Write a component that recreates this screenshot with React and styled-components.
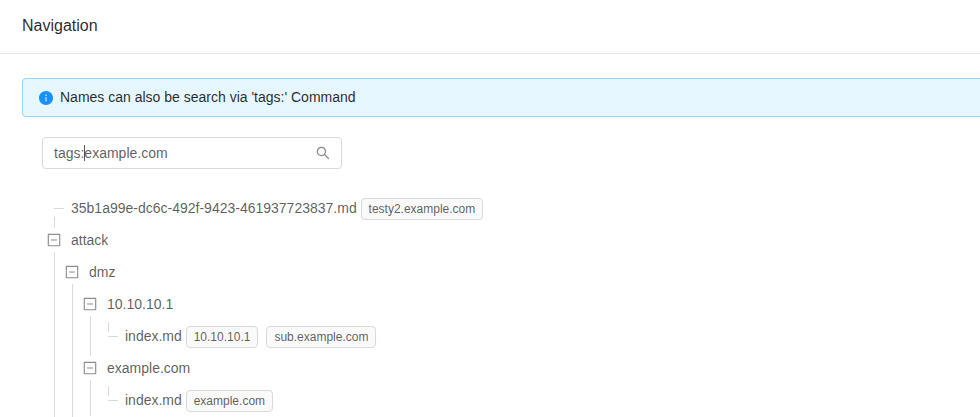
import React from "react";
import styled, { createGlobalStyle } from "styled-components";

const GlobalStyle = createGlobalStyle`
  * { box-sizing: border-box; }
  body {
    margin: 0;
    overflow: hidden;
    background: #fff;
    color: rgba(0, 0, 0, 0.65);
    font-family: "Liberation Sans", Arial, sans-serif;
    font-size: 14px;
    line-height: 22px;
  }
`;

const Page = styled.main`
  height: 417px;
  overflow: hidden;
`;

const Header = styled.header`
  height: 54px;
  padding: 14px 22px 0;
  border-bottom: 1px solid #e8e8e8;
`;

const Title = styled.h1`
  margin: 0;
  color: rgba(0, 0, 0, 0.85);
  font-size: 16px;
  font-weight: 400;
  line-height: 24px;
`;

const Alert = styled.div`
  display: flex;
  align-items: flex-start;
  gap: 6px;
  width: 980px;
  height: 39px;
  margin: 24px 0 20px 22px;
  padding: 7px 15px;
  border: 1px solid #91d5ff;
  border-radius: 4px;
  background: #e6f7ff;
  color: rgba(0, 0, 0, 0.85);
`;

const Icon = styled.svg`
  flex: none;
  display: block;
  width: 16px;
  height: 16px;
  margin-top: ${(p) => p.$drop || 0}px;
  fill: ${(p) => p.$color};
`;

const SearchBox = styled.div`
  display: flex;
  align-items: center;
  justify-content: space-between;
  width: 300px;
  height: 32px;
  margin-left: 42px;
  padding: 0 10px 0 11px;
  border: 1px solid #d9d9d9;
  border-radius: 4px;
`;

const Query = styled.span`
  white-space: nowrap;
`;

const Caret = styled.span`
  display: inline-block;
  width: 1px;
  height: 16px;
  margin-right: -1px;
  vertical-align: -3px;
  background: #595959;
`;

const Tree = styled.div`
  margin: 23px 0 0 45px;
`;

const Row = styled.div`
  display: flex;
  height: 32px;
`;

const Guide = styled.span`
  flex: none;
  width: 18px;
  height: 32px;
  background: linear-gradient(#d9d9d9, #d9d9d9) 9px 0 / 1px 100% no-repeat;
`;

/* The expanded node's guide begins under its icon; a stub closes the guide above it. */
const Switcher = styled.span`
  flex: none;
  width: 18px;
  height: 32px;
  padding: 8px 0 0 1px;
  background:
    linear-gradient(#d9d9d9, #d9d9d9) 9px 28px / 1px 4px no-repeat,
    linear-gradient(#d9d9d9, #d9d9d9) 9px 0 / 1px ${(p) => (p.$stub ? 4 : 0)}px no-repeat;
`;

const LeafMark = styled.span`
  flex: none;
  width: 19px;
  height: 32px;
  margin-right: -1px;
  background:
    linear-gradient(#d9d9d9, #d9d9d9) 9px 16px / 10px 1px no-repeat,
    linear-gradient(#d9d9d9, #d9d9d9) 9px ${(p) => (p.$root ? "25px / 1px 7px" : "2px / 1px 10px")} no-repeat;
`;

const Label = styled.span`
  margin-left: 8px;
  line-height: 32px;
  white-space: nowrap;
`;

const Tag = styled.span`
  display: inline-block;
  height: 22px;
  margin: 6px 8px 0 ${(p) => (p.$first ? 3.89 : 0)}px;
  padding: 0 7px;
  border: 1px solid #d9d9d9;
  border-radius: 4px;
  background: #fafafa;
  font-size: 12px;
  line-height: 20px;
  white-space: nowrap;
`;

const PATHS = {
  info: "M512 64C264.6 64 64 264.6 64 512s200.6 448 448 448 448-200.6 448-448S759.4 64 512 64zm32 664c0 4.4-3.6 8-8 8h-48c-4.4 0-8-3.6-8-8V456c0-4.4 3.6-8 8-8h48c4.4 0 8 3.6 8 8v272zm-32-344a48.01 48.01 0 0 1 0-96 48.01 48.01 0 0 1 0 96z",
  search: "M909.6 854.5L649.9 594.8C690.2 542.7 712 479 712 412c0-80.2-31.3-155.4-87.9-212.1-56.6-56.7-132-87.9-212.1-87.9s-155.5 31.3-212.1 87.9C143.2 256.5 112 331.8 112 412c0 80.1 31.3 155.5 87.9 212.1C256.5 680.8 331.8 712 412 712c67 0 130.6-21.8 182.7-62l259.7 259.6a8.2 8.2 0 0 0 11.6 0l43.6-43.5a8.2 8.2 0 0 0 0-11.6zM570.4 570.4C528 612.7 471.8 636 412 636s-116-23.3-158.4-65.6C211.3 528 188 471.8 188 412s23.3-116.1 65.6-158.4C296 211.3 352.2 188 412 188s116.1 23.2 158.4 65.6S636 352.2 636 412s-23.3 116.1-65.6 158.4z",
  minus: "M328 544h368c4.4 0 8-3.6 8-8v-48c0-4.4-3.6-8-8-8H328c-4.4 0-8 3.6-8 8v48c0 4.4 3.6 8 8 8zM880 112H144c-17.7 0-32 14.3-32 32v736c0 17.7 14.3 32 32 32h736c17.7 0 32-14.3 32-32V144c0-17.7-14.3-32-32-32zm-40 728H184V184h656v656z",
};

function Glyph({ name, color, drop }) {
  return (
    <Icon viewBox="0 0 1024 1024" $color={color} $drop={drop} aria-hidden="true">
      <path d={PATHS[name]} />
    </Icon>
  );
}

const ROWS = [
  { label: "35b1a99e-dc6c-492f-9423-461937723837.md", depth: 0, leaf: true, tags: ["testy2.example.com"] },
  { label: "attack", depth: 0, stub: true },
  { label: "dmz", depth: 1 },
  { label: "10.10.10.1", depth: 2 },
  { label: "index.md", depth: 3, leaf: true, tags: ["10.10.10.1", "sub.example.com"] },
  { label: "example.com", depth: 2, stub: true },
  { label: "index.md", depth: 3, leaf: true, tags: ["example.com"] },
];

function Guides({ depth }) {
  return Array.from({ length: depth }, (_, i) => <Guide key={i} />);
}

function TreeRow({ row }) {
  return (
    <Row>
      <Guides depth={row.depth} />
      {row.leaf ? (
        <LeafMark $root={row.depth === 0} />
      ) : (
        <Switcher $stub={row.stub}>
          <Glyph name="minus" color="#8c8c8c" />
        </Switcher>
      )}
      <Label>{row.label}</Label>
      {(row.tags || []).map((tag, i) => (
        <Tag key={tag} $first={i === 0}>{tag}</Tag>
      ))}
    </Row>
  );
}

export default function App() {
  return (
    <Page>
      <GlobalStyle />
      <Header>
        <Title>Navigation</Title>
      </Header>
      <Alert>
        <Glyph name="info" color="#1890ff" drop={4} />
        <span>Names can also be search via 'tags:' Command</span>
      </Alert>
      <SearchBox>
        <Query>tags:<Caret />example.com</Query>
        <Glyph name="search" color="#8c8c8c" />
      </SearchBox>
      <Tree>
        {ROWS.map((row, i) => (
          <TreeRow key={i} row={row} />
        ))}
        <Row>
          <Guides depth={2} />
        </Row>
      </Tree>
    </Page>
  );
}
